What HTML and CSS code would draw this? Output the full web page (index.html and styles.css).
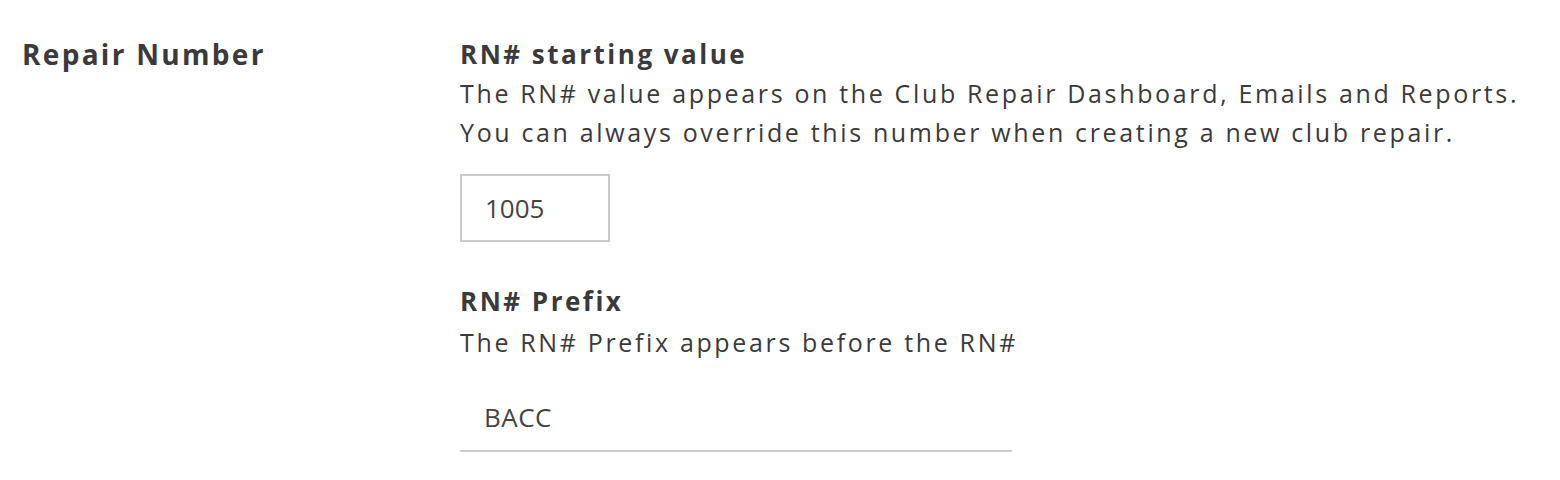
FILE: index.html
```html
<!DOCTYPE html>
<html>
<head>
<meta charset="utf-8">
<link rel="stylesheet" href="styles.css">
</head>
<body>
<div class="section">
  <div class="label">Repair Number</div>
  <div class="fields">
    <div class="field">
      <div class="title">RN# starting value</div>
      <div class="desc">The RN# value appears on the Club Repair Dashboard, Emails and Reports.<br>You can always override this number when creating a new club repair.</div>
      <input class="box-input" type="text" value="1005">
    </div>
    <div class="field field-second">
      <div class="title">RN# Prefix</div>
      <div class="desc desc-second">The RN# Prefix appears before the RN#</div>
      <input class="line-input" type="text" value="BACC">
    </div>
  </div>
</div>
</body>
</html>
```
FILE: styles.css
```css
html, body {
  margin: 0;
  padding: 0;
  background: #fff;
}
body {
  font-family: "Open Sans", "Liberation Sans", sans-serif;
  color: #3a3a3c;
}
.section {
  display: grid;
  grid-template-columns: 438px 1fr;
  padding: 36px 0 0 22px;
}
.label {
  font-size: 28px;
  font-weight: 700;
  letter-spacing: 2.3px;
  line-height: 36px;
}
.fields {
  display: flex;
  flex-direction: column;
}
.title {
  font-size: 26px;
  font-weight: 700;
  letter-spacing: 2.5px;
  line-height: 36px;
}
.desc {
  font-size: 25px;
  letter-spacing: 2.65px;
  line-height: 39px;
  margin-top: 2px;
}
.desc-second {
  margin-top: 4px;
}
.box-input {
  margin-top: 22px;
  width: 150px;
  height: 68px;
  box-sizing: border-box;
  border: 2px solid #cbcbcb;
  padding: 0 0 0 23px;
  font-family: "Open Sans", "Liberation Sans", sans-serif;
  font-size: 26px;
  color: #444;
  outline: none;
  background: #fff;
}
.field-second {
  margin-top: 41px;
}
.line-input {
  margin-top: 28px;
  width: 552px;
  height: 62px;
  box-sizing: border-box;
  border: none;
  border-bottom: 2px solid #cbcbcb;
  padding: 0 0 6px 24px;
  font-family: "Open Sans", "Liberation Sans", sans-serif;
  font-size: 26px;
  letter-spacing: 0.5px;
  color: #444;
  outline: none;
  background: #fff;
}
```
